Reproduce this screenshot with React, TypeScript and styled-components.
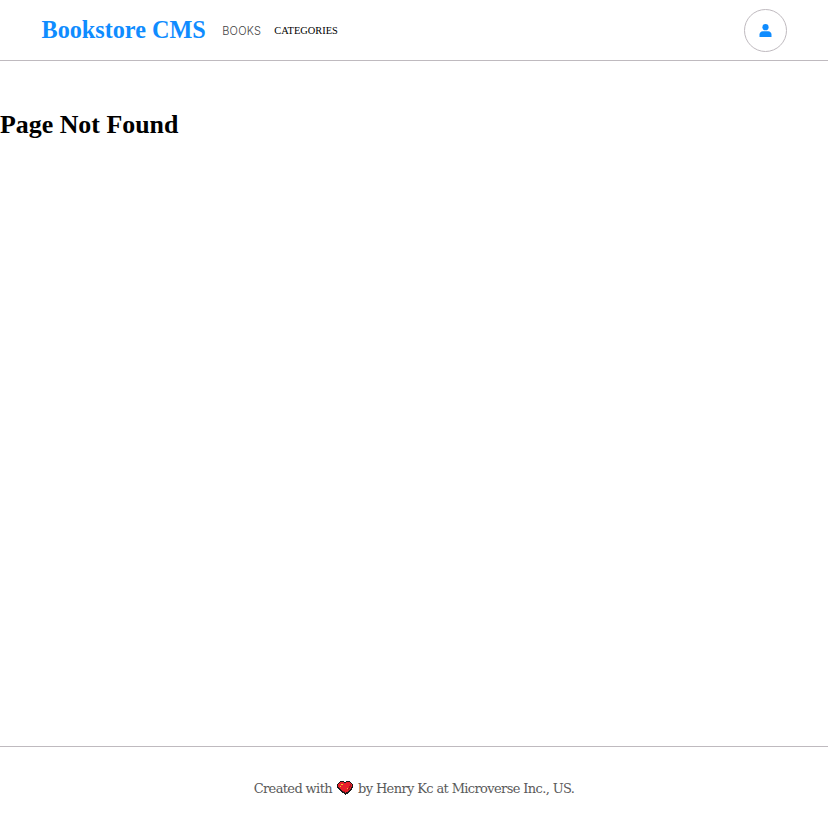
import styled, { createGlobalStyle } from 'styled-components'

const GlobalStyle = createGlobalStyle`
	html, body {
		margin: 0;
		padding: 0;
		background-color: #fff;
		font-family: 'Liberation Serif', serif;
	}
`

function PixelHeart() {
	return (
		<HeartIcon viewBox='0 0 16 14' shapeRendering='crispEdges'>
			<path fill='#1a1a1a' d='M3 0h4v1h2V0h4v1h1v1h1v1h1v4h-1v2h-1v1h-1v1h-1v1h-1v1H9v1H8v-1H7v-1H5v-1H4v-1H3V9H2V8H1V7H0V3h1V2h1V1h1z' />
			<path fill='#e8202a' d='M3 1h4v1h2V1h4v1h1v1h1v3h-1v2h-1v1h-1v1h-1v1H9v1H8v-1H6v-1H5V9H4V8H3V7H2V6H1V3h1V2h1z' />
			<path fill='#a8141c' d='M13 3h1v3h-1v2h-1v1h-1V7h1V5h1zM6 10h2v1H6z' />
			<path fill='#f5c32c' d='M4 3h2v1H4zM3 5h1v1H3zM10 7h1v1h-1z' />
		</HeartIcon>
	)
}

function UserIcon() {
	return (
		<UserSvg viewBox='0 0 13 13'>
			<circle cx='6.5' cy='3.2' r='3.1' />
			<path d='M0.5 13V10.4C0.5 8.5 2 7.2 3.8 7.2h5.4c1.8 0 3.3 1.3 3.3 3.2V13z' />
		</UserSvg>
	)
}

export default function App() {
	return (
		<Page>
			<GlobalStyle />

			<Header>
				<Brand>Bookstore CMS</Brand>

				<Nav>
					<BooksLink>BOOKS</BooksLink>
					<CategoriesLink>CATEGORIES</CategoriesLink>
				</Nav>

				<ProfileButton>
					<UserIcon />
				</ProfileButton>
			</Header>

			<Main>
				<Title>Page Not Found</Title>
			</Main>

			<Footer>
				<FooterText>
					Created with <PixelHeart /> by Henry Kc at Microverse Inc., US.
				</FooterText>
			</Footer>
		</Page>
	)
}

const Page = styled.div`
	height: 828px;
	display: flex;
	flex-direction: column;
	overflow: hidden;
`

const Header = styled.header`
	height: 60px;
	flex-shrink: 0;
	display: flex;
	align-items: center;
	padding: 0 41px 0 41.5px;
	border-bottom: 1px solid #bfbabf;
`

const Brand = styled.div`
	color: #0f8cff;
	font-size: 24.2px;
	font-weight: 700;
	margin-right: 16.5px;
`

const Nav = styled.nav`
	display: flex;
	align-items: center;
	gap: 13px;
	flex: 1;
`

const BooksLink = styled.a`
	color: #444;
	font-family: 'Inter', sans-serif;
	font-size: 11px;
	font-weight: 300;
	letter-spacing: 0.25px;
	position: relative;
	top: 1px;
`

const CategoriesLink = styled.a`
	color: #000;
	font-size: 10.4px;
`

const ProfileButton = styled.div`
	width: 41px;
	height: 41px;
	border: 1px solid #bfbabf;
	border-radius: 50%;
	display: flex;
	align-items: center;
	justify-content: center;
`

const UserSvg = styled.svg`
	width: 13px;
	height: 13px;
	fill: #0f8cff;
`

const Main = styled.main`
	flex: 1;
	padding-top: 48px;
`

const Title = styled.h2`
	margin: 0;
	color: #000;
	font-size: 25.9px;
	line-height: 31px;
	font-weight: 700;
`

const Footer = styled.footer`
	height: 82px;
	flex-shrink: 0;
	border-top: 1px solid #bfbabf;
	display: flex;
	justify-content: center;
	padding-top: 32px;
	box-sizing: border-box;
`

const FooterText = styled.p`
	margin: 0;
	color: #5a5a5a;
	font-family: 'DejaVu Serif', serif;
	font-size: 13px;
	letter-spacing: -0.63px;
	line-height: 20px;
`

const HeartIcon = styled.svg`
	width: 16px;
	height: 14px;
	margin: 0 1.5px;
	vertical-align: -2px;
`
